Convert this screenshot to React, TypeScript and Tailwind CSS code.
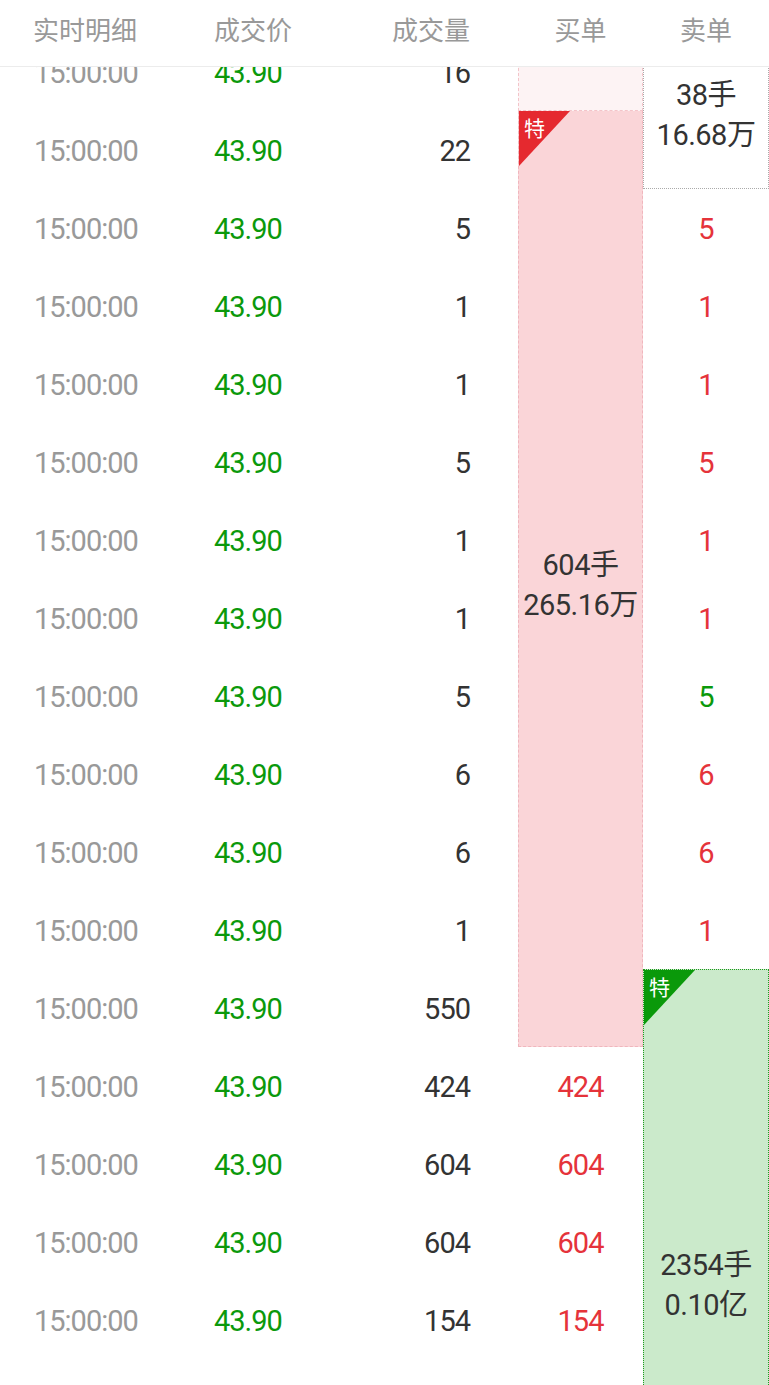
import React from "react";

// rows of the tick list: volume, colour of the sell value (if any), buy value
const rows = [
  { vol: "16" },
  { vol: "22" },
  { vol: "5", sell: "5", up: true },
  { vol: "1", sell: "1", up: true },
  { vol: "1", sell: "1", up: true },
  { vol: "5", sell: "5", up: true },
  { vol: "1", sell: "1", up: true },
  { vol: "1", sell: "1", up: true },
  { vol: "5", sell: "5", up: false },
  { vol: "6", sell: "6", up: true },
  { vol: "6", sell: "6", up: true },
  { vol: "1", sell: "1", up: true },
  { vol: "550" },
  { vol: "424", buy: "424" },
  { vol: "604", buy: "604" },
  { vol: "604", buy: "604" },
  { vol: "154", buy: "154" },
];

const num = "font-['Roboto','Noto_Sans_CJK_SC',sans-serif] tracking-[-1px]";

function Badge({ color }: { color: string }) {
  return (
    <div className="absolute left-0 top-0 w-[51px] h-[55px]">
      <div className={`absolute inset-0 [clip-path:polygon(0_0,100%_0,0_100%)] ${color}`} />
      <span className="absolute left-[5px] top-[5px] text-[21px] leading-[22px] text-white font-['Noto_Sans_CJK_SC',sans-serif]">
        特
      </span>
    </div>
  );
}

function BlockText({ a, b }: { a: string; b: string }) {
  return (
    <div className="flex flex-col items-center text-[29px] leading-[40px] text-[#333] tracking-[-0.5px] font-['Roboto','Noto_Sans_CJK_SC',sans-serif]">
      <span>{a}</span>
      <span>{b}</span>
    </div>
  );
}

export default function App() {
  return (
    <div className="relative w-[769px] h-[1385px] overflow-hidden bg-white">
      {/* header */}
      <div className="relative z-10 flex h-[67px] items-center pb-[9px] bg-white border-b border-[#ececec] text-[26px] text-[#999] font-['Noto_Sans_CJK_SC',sans-serif]">
        <div className="w-[190px] pl-[33px]">实时明细</div>
        <div className="w-[180px] pl-[24px]">成交价</div>
        <div className="w-[148px] pr-[48px] text-right">成交量</div>
        <div className="w-[125px] text-center">买单</div>
        <div className="w-[126px] text-center">卖单</div>
      </div>

      {/* list, scrolled so the first row sits under the header */}
      <div className="flex mt-[-34px]">
        <div className="flex flex-col w-[518px]">
          {rows.map((r, i) => (
            <div key={i} className={`flex h-[78px] items-center pt-[4px] text-[29px] ${num}`}>
              <div className="w-[190px] pl-[34px] text-[#999]">15:00:00</div>
              <div className="w-[180px] pl-[24px] text-[#0b990b]">43.90</div>
              <div className="w-[148px] pr-[48px] text-right text-[#333]">{r.vol}</div>
            </div>
          ))}
        </div>

        {/* buy column */}
        <div className="flex flex-col w-[125px]">
          <div className="h-[78px] bg-[#fdf3f4] border border-dashed border-[#f3c4c9]" />
          <div className="relative flex h-[936px] items-center justify-center pt-3 bg-[#fad5d8] border-x border-b border-dashed border-[#f0b6bd]">
            <Badge color="bg-[#e5292f]" />
            <BlockText a="604手" b="265.16万" />
          </div>
          {rows.slice(13).map((r, i) => (
            <div key={i} className={`flex h-[78px] items-center justify-center pt-[4px] text-[29px] text-[#e5333a] ${num}`}>
              {r.buy}
            </div>
          ))}
        </div>

        {/* sell column */}
        <div className="flex flex-col w-[126px]">
          <div className="flex h-[156px] items-center justify-center pt-2 bg-white border border-dotted border-[#aaa]">
            <BlockText a="38手" b="16.68万" />
          </div>
          {rows.slice(2, 12).map((r, i) => (
            <div
              key={i}
              className={`flex h-[78px] items-center justify-center pt-[4px] text-[29px] ${num} ${r.up ? "text-[#e5333a]" : "text-[#0b990b]"}`}
            >
              {r.sell}
            </div>
          ))}
          <div className="relative flex h-[632px] items-center justify-center bg-[#cbeacb] border border-dotted border-[#1f9a1f]">
            <Badge color="bg-[#0a990a]" />
            <BlockText a="2354手" b="0.10亿" />
          </div>
        </div>
      </div>
    </div>
  );
}
